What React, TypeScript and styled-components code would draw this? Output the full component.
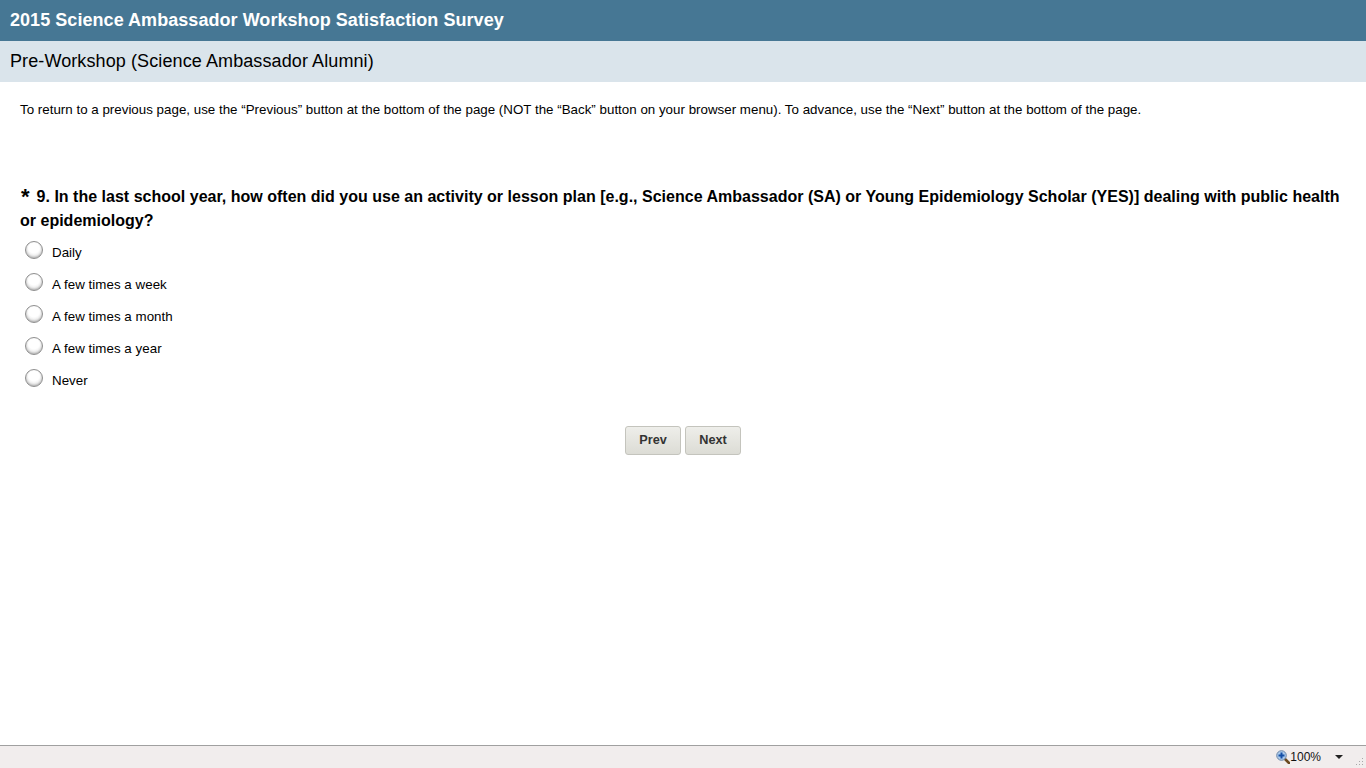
import React from "react";
import styled, { createGlobalStyle } from "styled-components";

const Global = createGlobalStyle`
  html, body { margin: 0; padding: 0; height: 100%; background: #fff; overflow: hidden; }
  #root { height: 100%; }
  * { box-sizing: border-box; }
`;

const Page = styled.div`
  height: 768px;
  display: flex;
  flex-direction: column;
  font-family: "Liberation Sans", Arial, sans-serif;
  color: #000;
`;

const TitleBar = styled.h1`
  margin: 0;
  height: 41px;
  padding: 0 10px;
  display: flex;
  align-items: center;
  background: #467794;
  color: #fff;
  font-size: 18px;
  letter-spacing: 0.05px;
  font-weight: 700;
`;

const PageBar = styled.h2`
  margin: 0;
  height: 41px;
  padding: 0 10px;
  display: flex;
  align-items: center;
  background: #dae4eb;
  font-size: 18px;
  letter-spacing: 0.1px;
  font-weight: 400;
`;

const Main = styled.main`
  flex: 1;
  padding: 20px 20px 0;
`;

const Intro = styled.p`
  margin: 0;
  font-size: 13.33px;
  letter-spacing: 0.012px;
  line-height: 15px;
`;

const Question = styled.h3`
  margin: 68px 0 0;
  font-size: 16px;
  font-weight: 700;
  letter-spacing: 0.01px;
  line-height: 24px;
`;

const Star = styled.span`
  font-size: 22px;
  line-height: 20px;
  margin-left: 1px;
  margin-right: 7px;
  vertical-align: -2px;
`;

const Options = styled.div`
  margin-top: 9px;
  display: flex;
  flex-direction: column;
  gap: 12px;
`;

const Option = styled.label`
  height: 20px;
  display: flex;
  align-items: center;
  padding-left: 5px;
  font-size: 13.33px;
  letter-spacing: 0.04px;
`;

const Radio = styled.span`
  width: 18px;
  height: 18px;
  margin-right: 9px;
  margin-top: -4px;
  border-radius: 50%;
  border: 1px solid #8f8f8f;
  background: radial-gradient(circle at 50% 35%, #fff 0 40%, #ececec 65%, #bdbdbd 100%);
  box-shadow: inset 0 -1px 2px #b4b4b4;
`;

const OptionText = styled.span`
  margin-top: 1px;
`;

const Nav = styled.div`
  margin-top: 36px;
  display: flex;
  justify-content: center;
  gap: 4px;
`;

const NavButton = styled.button`
  width: 56px;
  height: 29px;
  padding: 0 0 2px;
  border: 1px solid #c4c4bd;
  border-radius: 3px;
  background: linear-gradient(#eeeeea, #dcdcd5);
  color: #333;
  font-family: inherit;
  font-size: 12.7px;
  font-weight: 700;
`;

const StatusBar = styled.footer`
  height: 23px;
  border-top: 1px solid #a0a0a0;
  background: #f1eded;
  display: flex;
  align-items: center;
  justify-content: flex-end;
  position: relative;
  font-size: 12px;
  color: #111;
`;

const Zoom = styled.span`
  display: flex;
  align-items: center;
  margin-right: 14px;
`;

const Caret = styled.span`
  width: 0;
  height: 0;
  margin-right: 23px;
  border-left: 4px solid transparent;
  border-right: 4px solid transparent;
  border-top: 4px solid #222;
`;

const Grip = styled.svg`
  position: absolute;
  right: 1px;
  bottom: 1px;
`;

const options = ["Daily", "A few times a week", "A few times a month", "A few times a year", "Never"];

export default function App() {
  return (
    <Page>
      <Global />
      <TitleBar>2015 Science Ambassador Workshop Satisfaction Survey</TitleBar>
      <PageBar>Pre-Workshop (Science Ambassador Alumni)</PageBar>
      <Main>
        <Intro>To return to a previous page, use the “Previous” button at the bottom of the page (NOT the “Back” button on your browser menu). To advance, use the “Next” button at the bottom of the page.</Intro>
        <Question>
          <Star>*</Star>9. In the last school year, how often did you use an activity or lesson plan [e.g., Science Ambassador (SA) or Young Epidemiology Scholar (YES)] dealing with public health or epidemiology?
        </Question>
        <Options>
          {options.map((o) => (
            <Option key={o}>
              <Radio />
              <OptionText>{o}</OptionText>
            </Option>
          ))}
        </Options>
        <Nav>
          <NavButton>Prev</NavButton>
          <NavButton>Next</NavButton>
        </Nav>
      </Main>
      <StatusBar>
        <Zoom>
          <svg width="14" height="14" viewBox="0 0 14 14">
            <path d="M8.5 8.5L13 13" stroke="#6b4a20" strokeWidth="2.6" strokeLinecap="round" />
            <circle cx="5.5" cy="5.5" r="4.8" fill="#a9c8ea" stroke="#6f88a8" />
            <path d="M5.5 2.5v6M2.5 5.5h6" stroke="#144fa6" strokeWidth="2" />
          </svg>
          100%
        </Zoom>
        <Caret />
        <Grip width="10" height="10" viewBox="0 0 10 10">
          <path d="M7 1h1v1H7zM4 4h1v1H4zM7 4h1v1H7zM1 7h1v1H1zM4 7h1v1H4zM7 7h1v1H7z" fill="#a8a8a8" />
        </Grip>
      </StatusBar>
    </Page>
  );
}
